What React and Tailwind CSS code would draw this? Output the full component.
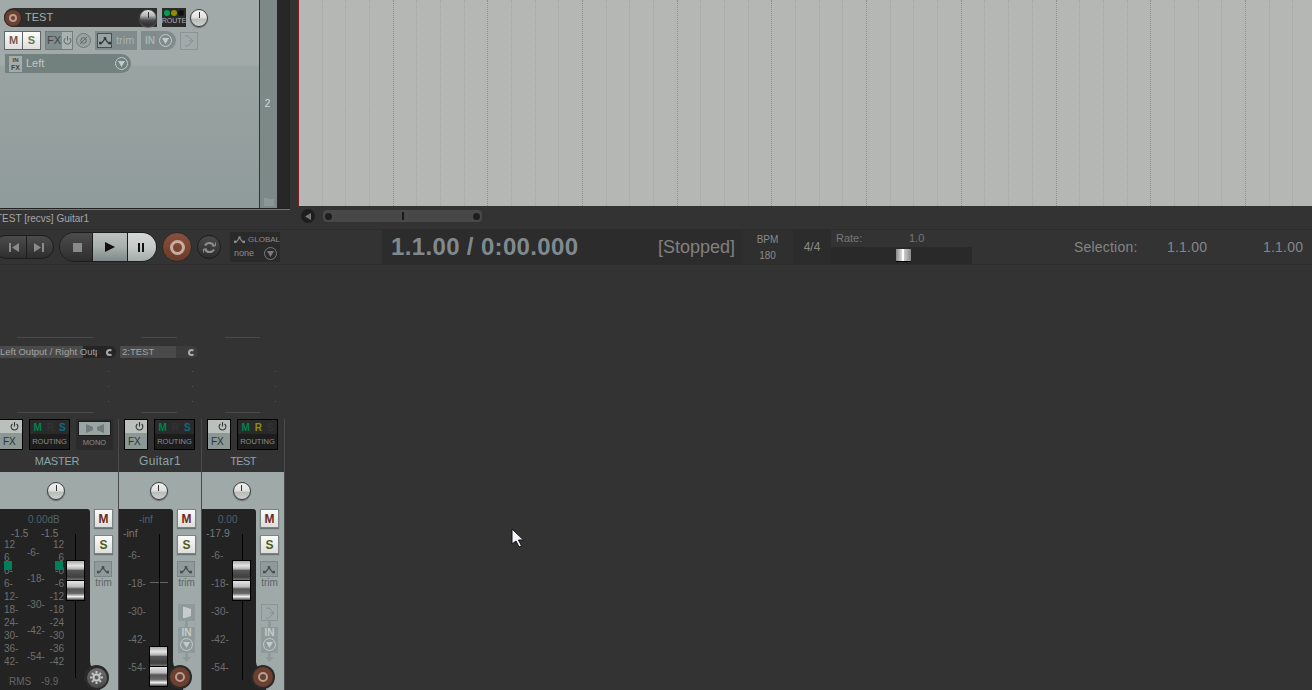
import React from 'react';

const beats = Array.from({ length: 43 }, (_, i) => i);
const knobLight = 'bg-[linear-gradient(#f0f1ef_0%,#e2e4e2_45%,#b9bdba_60%,#cfd2cf_100%)]';
const knobDark = 'bg-[linear-gradient(#dfe2e0_0%,#b5b8b6_35%,#4a4a4a_65%,#2c2c2c_100%)]';

const Knob = ({ dark, size = 'w-[18px] h-[18px]' }) => (
  <div className={`${size} ${dark ? knobDark : knobLight} rounded-full border border-[#3b3f3f] flex justify-center shrink-0 shadow-[0_1px_1px_#5e6766]`}>
    <div className="w-px h-[6px] mt-[2px] bg-[#333]" />
  </div>
);

const DownCircle = ({ light }) => (
  <div className={`w-[13px] h-[13px] rounded-full border flex items-center justify-center shrink-0 ${light ? 'border-[#c3cac9]' : 'border-[#7a7a7a]'}`}>
    <svg width="7" height="6" viewBox="0 0 7 6"><path d="M0 0h7L3.500 6z" fill={light ? '#c3cac9' : '#7a7a7a'} /></svg>
  </div>
);

const TrimGlyph = ({ color = '#3d4444' }) => (
  <svg width="12" height="9" viewBox="0 0 14 10" fill="none">
    <path d="M1 8h2l4-5 4 5h2" stroke={color} strokeWidth="1.400" />
    <rect x="0" y="6.500" width="3" height="3" fill={color} />
    <rect x="5.500" y="1" width="3" height="3" fill={color} />
    <rect x="11" y="6.500" width="3" height="3" fill={color} />
  </svg>
);

const PhaseGlyph = () => (
  <svg width="10" height="12" viewBox="0 0 10 12" fill="none" stroke="#849090" strokeWidth="1">
    <path d="M1 1h3l5 5-5 5H1" />
    <path d="M9 6H5" />
  </svg>
);

const RecCircle = ({ size = 'w-[17px] h-[17px]', dot = 'w-[9px] h-[9px] border-2' }) => (
  <div className={`${size} rounded-full bg-[#6d3f2f] ring-1 ring-[#2a2a2a] flex items-center justify-center shrink-0`}>
    <div className={`${dot} rounded-full border-[#b89f94]`} />
  </div>
);

const Cap = () => (
  <div className="flex flex-col w-[19px]">
    <div className="h-[21px] border border-black bg-[linear-gradient(#aaa_0%,#e4e4e4_25%,#b0b0b0_42%,#555_50%,#3f3f3f_85%,#777_100%)]" />
    <div className="h-[20px] border border-t-0 border-black bg-[linear-gradient(#e4e4e4_0%,#bbb_30%,#555_42%,#666_65%,#f2f2f2_82%,#444_100%)]" />
  </div>
);

const MSButton = ({ label, color }) => (
  <div className={`w-[19px] h-[19px] bg-[linear-gradient(#fafafa,#dedfdc)] border border-[#7b8382] shadow-[0_1px_1px_#6b7473] flex items-center justify-center text-[12px] font-bold ${color}`}>
    {label}
  </div>
);

const TrimStack = () => (
  <>
    <div className="mt-[7px] w-[18px] h-[16px] border border-[#7b8584] bg-[#8f9b9a] flex items-center justify-center">
      <TrimGlyph color="#48504f" />
    </div>
    <div className="w-[19px] text-center text-[10px] leading-[11px] text-[#5c6665]">trim</div>
  </>
);

const MRS = ({ r = '#333', s = '#0d6a80', m = '#00824d' }) => (
  <div className="flex-1 flex flex-col h-[31px] border border-black bg-[#1d1d1d] font-bold">
    <div className="h-[14px] bg-[#2a2a2a] flex items-center justify-center gap-[5px] text-[10px]">
      <span style={{ color: m }}>M</span>
      <span style={{ color: r }}>R</span>
      <span style={{ color: s }}>S</span>
    </div>
    <div className="flex-1 flex items-center justify-center text-[7.5px] font-normal text-[#8c8c8c]">ROUTING</div>
  </div>
);

const FxBox = ({ cls }) => (
  <div className={`${cls} h-[31px] border border-black flex flex-col shrink-0`}>
    <div className="h-[13px] bg-[#bcc0bd] flex justify-end items-center pr-[3px]">
      <svg width="9" height="9" viewBox="0 0 9 9" fill="none" stroke="#333" strokeWidth="1.100"><path d="M2.400 2a3.400 3.400 0 1 0 4.200 0M4.500 0v4.500" /></svg>
    </div>
    <div className="flex-1 bg-[#8b9896] flex items-center pl-[3px] text-[10px] text-[#2e3535]">FX</div>
  </div>
);

const Dots = ({ x }) => (
  <div className="h-[54px] flex flex-col gap-[14px] pt-[13px]" style={{ paddingLeft: x }}>
    <div className="w-px h-px bg-[#555]" />
    <div className="w-px h-px bg-[#555]" />
    <div className="w-px h-px bg-[#555]" />
  </div>
);

const StripHead = ({ lineLeft, lineW, send, dotX }) => (
  <>
    <div className="h-[72px]" />
    <div className="h-px bg-[#4a4a4a]" style={{ marginLeft: lineLeft, width: lineW }} />
    <div className="h-[8px]" />
    {send}
    <Dots x={dotX} />
    <div className="h-px bg-[#4a4a4a]" style={{ marginLeft: lineLeft, width: lineW }} />
    <div className="h-[6px]" />
  </>
);

const ScaleCol = ({ items, rowH, cls }) => (
  <div className={`flex flex-col text-[10px] text-[#6f6f6f] ${cls}`}>
    {items.map((t, i) => (
      <div key={i} className="flex items-center" style={{ height: rowH }}>{t}</div>
    ))}
  </div>
);

// grey column keeps a rounded foot where it meets the dark fader panel
const PanelFoot = ({ left }) => (
  <div className="absolute top-[148px] w-[10px] h-[33px] bg-[#232323]" style={{ left }}>
    <div className="h-[14px] bg-[#9fa9a8] rounded-bl-[9px]" />
  </div>
);

const ChannelStrip = ({ name, nameCls, top, topPad, sub, capOffset, extraLine, icon, send, r, s }) => (
  <div className="w-[83px] shrink-0 flex flex-col">
    <StripHead lineLeft={23} lineW={35} dotX={73} send={send} />
    <div className="flex-1 flex flex-col border-r border-[#4a4a4a]">
      <div className="flex h-[31px] pl-[5px] pr-[6px] gap-[6px]">
        <FxBox cls="w-[24px]" />
        <MRS r={r} s={s} />
      </div>
      <div className={`h-[22px] flex items-center justify-center text-[#8ea2aa] ${nameCls}`}>{name}</div>
      <div className="h-[218px] bg-[#9fa9a8] flex flex-col">
        <div className="h-[37px] flex items-center justify-center pr-[3px]"><Knob /></div>
        <div className="flex-1 flex relative">
          <div className="w-[54px] h-full bg-[#232323] rounded-tr-[3px] relative">
            <div className="h-[20px] flex items-center text-[10px] text-[#4f616b]" style={{ paddingLeft: topPad }}>{top}</div>
            <div className="h-[10px] pl-[4px] flex items-center text-[10.5px] text-[#777]">{sub}</div>
            <ScaleCol items={['-6-', '-18-', '-30-', '-42-', '-54-']} rowH={28} cls="pl-[9px] pt-[2px]" />
            {extraLine && <div className="absolute left-[31px] top-[73px] w-[18px] h-px bg-[#666]" />}
            <div className="absolute left-[40px] top-[25px] w-px h-[146px] bg-black" />
            <div className="absolute left-[30px]" style={{ top: capOffset }}><Cap /></div>
          </div>
          <div className="flex-1 flex flex-col pl-[4px]">
            <MSButton label="M" color="text-[#6b2b22]" />
            <div className="h-[7px]" />
            <MSButton label="S" color="text-[#4d5a1c]" />
            <TrimStack />
            <div className="h-[16px]" />
            {icon}
            <div className="ml-[8px] w-[3px] h-[6px] bg-[#8f9b9a]" />
            <div className="ml-[1px] w-[17px] h-[26px] bg-[#8f9b9a] flex flex-col items-center text-[10px] leading-[11px] font-bold text-[#c6cccb]">
              IN
              <DownCircle light />
            </div>
            <svg className="ml-[5px]" width="9" height="9" viewBox="0 0 9 9"><path d="M3 0h3v4h3L4.500 9 0 4h3z" fill="#8f9b9a" /></svg>
          </div>
          <PanelFoot left={54} />
          <div className="absolute left-[49px] top-[156px] w-[24px] h-[24px] flex items-center justify-center rounded-full bg-[#2a2a2a]">
            <RecCircle size="w-[20px] h-[20px]" dot="w-[10px] h-[10px] border-2" />
          </div>
        </div>
      </div>
    </div>
  </div>
);

const SendBox = ({ label, boxCls, textW, w, ml, cls }) => (
  <div className={`h-[12px] flex items-center rounded-r-full text-[9.500px] text-[#a3a3a3] ${cls}`} style={{ marginLeft: ml, width: w }}>
    <div className={`h-full overflow-hidden whitespace-nowrap leading-[12px] pl-[2px] ${boxCls}`} style={{ width: textW }}>{label}</div>
    <div className="flex-1 flex justify-end pr-[3px] items-center">
      <div className="w-[7px] h-[7px] rounded-full border-2 border-[#aaa] border-r-transparent" />
    </div>
  </div>
);

export default function App() {
  return (
    <div className="relative w-[1312px] h-[690px] overflow-hidden bg-[#333333] flex flex-col font-['Liberation_Sans',sans-serif]">
      {/* tracks + arrange */}
      <div className="h-[229px] flex shrink-0">
        <div className="w-[298px] shrink-0 flex flex-col">
          <div className="h-[208px] w-[290px] flex shrink-0">
            <div className="w-[259px] bg-[linear-gradient(#a1aaa9_0%,#a1aaa9_31%,#99a3a2_32%,#8f9b9a_100%)] border-r border-[#333] box-content pt-[8px] flex flex-col">
              <div className="flex items-center pl-[4px] h-[19px]">
                <div className="w-[153px] h-[19px] rounded-l-full rounded-r-[6px] bg-[#2e2e2e] flex items-center">
                  <RecCircle size="w-[16px] h-[16px] ml-px" dot="w-[8px] h-[8px] border-2" />
                  <span className="ml-[4px] text-[11px] text-[#a8adab] flex-1">TEST</span>
                  <Knob dark />
                </div>
                <div className="ml-[5px] w-[24px] h-[19px] bg-[#2a2a2a] flex flex-col items-center pt-[2px]">
                  <div className="flex gap-[1px]">
                    <div className="w-[6px] h-[6px] rounded-full bg-[#00a050]" />
                    <div className="w-[6px] h-[6px] rounded-full bg-[#8f8f00]" />
                    <div className="w-[6px] h-[6px] rounded-full bg-[#111]" />
                  </div>
                  <span className="text-[7px] leading-[10px] text-[#b0b0b0]">ROUTE</span>
                </div>
                <div className="ml-[4px]"><Knob /></div>
              </div>
              <div className="flex items-center pl-[4px] h-[19px] mt-[4px]">
                <div className="w-[19px] h-[19px] bg-[linear-gradient(#fafafa,#dedfdc)] border border-[#5f6766] flex items-center justify-center text-[11px] font-bold text-[#7a5a50]">M</div>
                <div className="w-[19px] h-[19px] -ml-px bg-[linear-gradient(#fafafa,#dedfdc)] border border-[#5f6766] flex items-center justify-center text-[11px] font-bold text-[#6a7550]">S</div>
                <div className="ml-[4px] w-[28px] h-[19px] border border-[#727c7b] flex">
                  <div className="w-[16px] bg-[#7f8c8b] flex items-center justify-center text-[11px] text-[#3e4645]">FX</div>
                  <div className="flex-1 bg-[#aab2b1] flex items-center justify-center">
                    <svg width="9" height="9" viewBox="0 0 9 9" fill="none" stroke="#5f6766" strokeWidth="1"><path d="M2.400 2a3.400 3.400 0 1 0 4.200 0M4.500 0v4.500" /></svg>
                  </div>
                </div>
                <div className="ml-[3px] w-[15px] h-[15px] rounded-full border border-[#6f7978] bg-[#99a3a2] flex items-center justify-center">
                  <svg width="9" height="9" viewBox="0 0 9 9" fill="none" stroke="#5f6766" strokeWidth="1"><circle cx="4.500" cy="4.500" r="2.800" /><path d="M1 8L8 1" /></svg>
                </div>
                <div className="ml-[4px] w-[42px] h-[19px] bg-[#7f8c8b] flex items-center pl-[2px]">
                  <div className="w-[15px] h-[15px] border border-[#48504f] bg-[#98a3a2] flex items-center justify-center"><TrimGlyph color="#333a3a" /></div>
                  <span className="ml-[4px] text-[11px] text-[#a9b2b1]">trim</span>
                </div>
                <div className="ml-[4px] w-[35px] h-[19px] rounded-r-full bg-[#7f8c8b] flex items-center pl-[4px] gap-[4px] text-[10px] font-bold text-[#a9b2b1]">
                  IN<DownCircle light />
                </div>
                <div className="ml-[4px] w-[18px] h-[18px] border border-[#8a9695] flex items-center justify-center">
                  <PhaseGlyph />
                </div>
              </div>
              <div className="flex items-center ml-[5px] mt-[4px] w-[126px] h-[19px] rounded-l-[10px] rounded-r-full bg-[#72807e]">
                <div className="ml-[4px] w-[13px] h-[16px] bg-[#a4adac] text-[6px] leading-[7px] font-bold text-[#3e4645] flex flex-col items-center justify-center">
                  <span>IN</span><span className="text-[7px]">FX</span>
                </div>
                <span className="ml-[4px] flex-1 text-[11px] text-[#bfc6c5]">Left</span>
                <div className="mr-[3px]"><DownCircle light /></div>
              </div>
            </div>
            <div className="w-[17px] bg-[#7d8987] flex flex-col items-center">
              <div className="h-[98px]" />
              <span className="text-[10px] leading-[12px] text-[#d5dad9] pr-[2px]">2</span>
              <div className="flex-1" />
              <svg className="mb-[2px]" width="10" height="8" viewBox="0 0 10 8"><path d="M0 0h4l1 1h5v7H0z" fill="#8b9695" /></svg>
            </div>
            <div className="flex-1 bg-[#272727]" />
          </div>
          <div className="h-px w-[290px] bg-[#222]" />
          <div className="h-px w-[290px] bg-[#777]" />
          <div className="h-[17px] -ml-[4px] flex items-center text-[10px] whitespace-nowrap text-[#a6a6a6]">TEST [recvs] Guitar1</div>
        </div>
        <div className="flex-1 flex flex-col min-w-0">
          <div className="h-[206px] flex overflow-hidden bg-[#b5b7b5] border-l border-[#7a1c20]">
            {beats.map((i) => (
              <div
                key={i}
                className={`w-[23.68px] shrink-0 border-r border-dotted ${i % 4 === 3 ? 'border-[#8f918f]' : 'border-[#a4a6a4]'}`}
              />
            ))}
          </div>
          <div className="flex-1 flex items-center pl-[3px] pb-[3px]">
            <div className="w-[14px] h-[14px] rounded-full bg-[#1e1e1e] flex items-center justify-center">
              <svg width="6" height="7" viewBox="0 0 6 7"><path d="M6 0v7L0 3.500z" fill="#777" /></svg>
            </div>
            <div className="ml-[8px] w-[159px] h-[12px] rounded-[4px] bg-[#484848] flex items-center justify-between px-[2px]">
              <div className="w-[7px] h-[7px] rounded-full bg-[#1e1e1e]" />
              <div className="w-[2px] h-[8px] bg-[#1a1a1a]" />
              <div className="w-[7px] h-[7px] rounded-full bg-[#1e1e1e]" />
            </div>
          </div>
        </div>
      </div>

      {/* transport */}
      <div className="h-[36px] shrink-0 flex items-center border-y border-[#2c2c2c]">
        <div className="-ml-[6px] w-[60px] h-[24px] rounded-full border border-[#1c1c1c] bg-[linear-gradient(#4c4c4c,#2e2e2e)] flex shrink-0">
          <div className="w-[32px] flex items-center justify-center border-r border-[#1c1c1c] pl-[6px]">
            <svg width="10" height="9" viewBox="0 0 10 9"><path d="M0 0h2v9H0zM10 0v9L3 4.500z" fill="#8a8a8a" /></svg>
          </div>
          <div className="flex-1 flex items-center justify-center pr-[3px]">
            <svg width="10" height="9" viewBox="0 0 10 9"><path d="M8 0h2v9H8zM0 0v9l7-4.500z" fill="#8a8a8a" /></svg>
          </div>
        </div>
        <div className="ml-[5px] w-[98px] h-[30px] rounded-full flex overflow-hidden border border-[#1c1c1c] shrink-0">
          <div className="w-[32px] bg-[linear-gradient(#4c4c4c,#2e2e2e)] flex items-center justify-center pl-[3px]">
            <div className="w-[9px] h-[9px] bg-[#8a8a8a]" />
          </div>
          <div className="w-[36px] bg-[linear-gradient(#bcc1bf_0%,#a8afad_50%,#7e8a88_100%)] border-x border-[#1c1c1c] flex items-center justify-center">
            <svg width="10" height="10" viewBox="0 0 10 10"><path d="M0 0l10 5-10 5z" fill="#111" /></svg>
          </div>
          <div className="flex-1 bg-[linear-gradient(#d6d9d7_0%,#c6cac8_50%,#a4abaa_100%)] flex items-center justify-center gap-[2px] pr-[2px]">
            <div className="w-[2px] h-[9px] bg-[#111]" />
            <div className="w-[2px] h-[9px] bg-[#111]" />
          </div>
        </div>
        <div className="ml-[5px] w-[30px] h-[30px] rounded-full bg-[linear-gradient(#85503c_0%,#7c4531_50%,#6a3a2a_100%)] border border-[#2a2a2a] flex items-center justify-center shrink-0">
          <div className="w-[15px] h-[15px] rounded-full border-[3px] border-[#c7aca0]" />
        </div>
        <div className="ml-[5px] w-[24px] h-[24px] rounded-full bg-[linear-gradient(#4a4a4a,#2e2e2e)] border border-[#1c1c1c] flex items-center justify-center shrink-0">
          <svg width="13" height="13" viewBox="0 0 13 13" fill="none" stroke="#8f8f8f" strokeWidth="2">
            <path d="M2 4.500A5 5 0 0 1 11 5M11 8.500A5 5 0 0 1 2 8" />
            <path d="M9 5h3.500V1.500M4 8H.5v3.500" strokeWidth="1" />
          </svg>
        </div>
        <div className="ml-[9px] w-[50px] h-[30px] bg-[#2a2a2a] flex flex-col justify-center pl-[4px] shrink-0">
          <div className="flex items-center gap-[3px] text-[8px] text-[#8a8a8a]">
            <TrimGlyph color="#8a8a8a" />
            GLOBAL
          </div>
          <div className="flex items-center justify-between pr-[3px] text-[9px] text-[#8a8a8a] pt-px">
            none
            <DownCircle />
          </div>
        </div>
        <div className="ml-[102px] w-[360px] h-[34px] bg-[#2c2c2c] flex items-center shrink-0">
          <span className="ml-[9px] w-[267px] text-[24px] font-bold tracking-[0.35px] whitespace-nowrap text-[#808a8e]">1.1.00 / 0:00.000</span>
          <span className="text-[18px] whitespace-nowrap text-[#808080]">[Stopped]</span>
        </div>
        <div className="w-[51px] h-[34px] bg-[#2f2f2f] flex flex-col items-center justify-center gap-[5px] text-[10px] leading-[11px] text-[#8a8a8a] shrink-0">
          <span>BPM</span>
          <span>180</span>
        </div>
        <div className="w-[38px] h-[34px] bg-[#2c2c2c] flex items-center justify-center text-[12px] text-[#8a8a8a] shrink-0">4/4</div>
        <div className="w-[141px] h-[34px] flex flex-col shrink-0">
          <div className="h-[17px] flex items-center text-[11px] text-[#777]">
            <span className="ml-[5px] w-[73px]">Rate:</span>
            <span>1.0</span>
          </div>
          <div className="flex-1 bg-[#292929] flex items-center pl-[65px]">
            <div className="w-[15px] h-[13px] flex border-b border-black">
              <div className="w-[6px] bg-[linear-gradient(90deg,#888,#ddd)]" />
              <div className="w-[2px] bg-white" />
              <div className="flex-1 bg-[linear-gradient(90deg,#ccc,#888)]" />
            </div>
          </div>
        </div>
        <span className="ml-[102px] w-[93px] text-[14px] tracking-[0.2px] text-[#858585] shrink-0">Selection:</span>
        <span className="w-[96px] text-[14px] tracking-[0.2px] text-[#858585] shrink-0">1.1.00</span>
        <span className="text-[14px] tracking-[0.2px] text-[#858585] shrink-0">1.1.00</span>
      </div>

      {/* mixer */}
      <div className="flex-1 flex min-h-0">
        <div className="w-[119px] shrink-0 flex flex-col">
          <StripHead
            lineLeft={17}
            lineW={77}
            dotX={108}
            send={<SendBox label="Left Output / Right Output" textW={99} boxCls="bg-[linear-gradient(90deg,#4a4a4a_85px,#252525_85px)]" w={118} ml={-2} cls="bg-[#252525]" />}
          />
          <div className="flex-1 flex flex-col border-r border-[#4a4a4a]">
            <div className="flex h-[31px] gap-[6px]">
              <FxBox cls="w-[23px] border-l-0" />
              <div className="w-[41px] flex"><MRS /></div>
              <div className="w-[37px] h-[31px] bg-[#2b2b2b] flex flex-col items-center pt-[2px]">
                <div className="w-[33px] h-[15px] border border-[#1c1c1c] bg-[#9aa5a3] flex items-center justify-center">
                  <svg width="18" height="9" viewBox="0 0 18 9"><path d="M0 0l7 3v3L0 9zM18 0l-7 3v3l7 3z" fill="#6f7a79" /></svg>
                </div>
                <span className="mt-[2px] text-[7.500px] leading-[10px] text-[#8c8c8c]">MONO</span>
              </div>
            </div>
            <div className="h-[22px] flex items-center justify-center pr-[4px] text-[11px] tracking-[-0.2px] text-[#8ea2aa]">MASTER</div>
            <div className="h-[218px] bg-[#9fa9a8] flex flex-col">
              <div className="h-[37px] flex items-center justify-center pr-[6px]"><Knob /></div>
              <div className="flex-1 flex relative">
                <div className="w-[90px] h-full bg-[#232323] rounded-tr-[3px] relative">
                  <div className="h-[20px] pl-[28px] flex items-center text-[10px] text-[#4f616b]">0.00dB</div>
                  <div className="h-[9px] flex items-center text-[10px] text-[#777]">
                    <span className="ml-[11px] w-[30px]">-1.5</span>
                    <span>-1.5</span>
                  </div>
                  <div className="flex">
                    <ScaleCol items={['12', '6', '0-', '6-', '12-', '18-', '24-', '30-', '36-', '42-']} rowH={13} cls="w-[22px] pl-[4px]" />
                    <ScaleCol items={['-6-', '-18-', '-30-', '-42-', '-54-']} rowH={26} cls="w-[30px] pt-[1px] pl-[5px]" />
                    <ScaleCol items={['12', '6', '-0', '-6', '-12', '-18', '-24', '-30', '-36', '-42']} rowH={13} cls="w-[12px] items-end" />
                  </div>
                  <div className="mt-[5px] flex text-[10px] text-[#666]">
                    <span className="ml-[9px] w-[32px]">RMS</span>
                    <span>-9.9</span>
                  </div>
                  <div className="absolute left-[4px] top-[52px] w-[8px] h-[9px] bg-[#00805a]" />
                  <div className="absolute left-[55px] top-[52px] w-[8px] h-[9px] bg-[#00805a]" />
                  <div className="absolute left-[75px] top-[25px] w-px h-[144px] bg-black" />
                  <div className="absolute left-[66px] top-[51px]"><Cap /></div>
                </div>
                <div className="flex-1 flex flex-col pl-[4px]">
                  <MSButton label="M" color="text-[#6b2b22]" />
                  <div className="h-[7px]" />
                  <MSButton label="S" color="text-[#4d5a1c]" />
                  <TrimStack />
                </div>
                <PanelFoot left={90} />
                <div className="absolute left-[84px] top-[156px] w-[25px] h-[25px] rounded-full bg-[#2a2a2a] flex items-center justify-center">
                  <div className="w-[20px] h-[20px] rounded-full bg-[linear-gradient(#6e6e6e,#4a4a4a)] flex items-center justify-center text-[#c4c4c4]">
                    <svg width="13" height="13" viewBox="0 0 13 13" fill="none" stroke="currentColor" strokeWidth="2">
                      <circle cx="6.500" cy="6.500" r="3" />
                      <path d="M6.500 0v2.500M6.500 10.500V13M0 6.500h2.500M10.500 6.500H13M2 2l1.700 1.700M9.300 9.300L11 11M11 2L9.300 3.700M3.700 9.300L2 11" />
                    </svg>
                  </div>
                </div>
              </div>
            </div>
          </div>
        </div>

        <ChannelStrip
          name="Guitar1"
          nameCls="text-[12px] tracking-[0.4px]"
          top="-inf"
          topPad={20}
          sub="-inf"
          capOffset={137}
          extraLine
          send={<SendBox label="2:TEST" textW={56} boxCls="bg-[#4a4a4a]" w={78} ml={1} cls="rounded-l-[2px] bg-[#3c3c3c]" />}
          icon={
            <div className="ml-[1px] w-[17px] h-[17px] bg-[#8f9b9a] flex items-center justify-center">
              <svg width="10" height="13" viewBox="0 0 10 13"><path d="M1 1h2l6 2v7l-6 2H1z" fill="#c6cccb" /></svg>
            </div>
          }
        />
        <ChannelStrip
          name="TEST"
          nameCls="text-[11px] tracking-[-0.6px]"
          top="0.00"
          topPad={16}
          sub="-17.9"
          capOffset={51}
          r="#8f8f00"
          s="#333"
          send={<div className="h-[12px]" />}
          icon={
            <div className="ml-[1px] w-[17px] h-[17px] border border-[#8a9695] flex items-center justify-center">
              <PhaseGlyph />
            </div>
          }
        />
      </div>

      {/* mouse pointer */}
      <svg className="absolute left-[511px] top-[528px]" width="13" height="20" viewBox="0 0 13 20">
        <path d="M1 1v15l4-3 3 6 2.500-1.200-3-5.800h5z" fill="#f4f4f4" stroke="#10101c" strokeWidth="1" />
      </svg>
    </div>
  );
}
